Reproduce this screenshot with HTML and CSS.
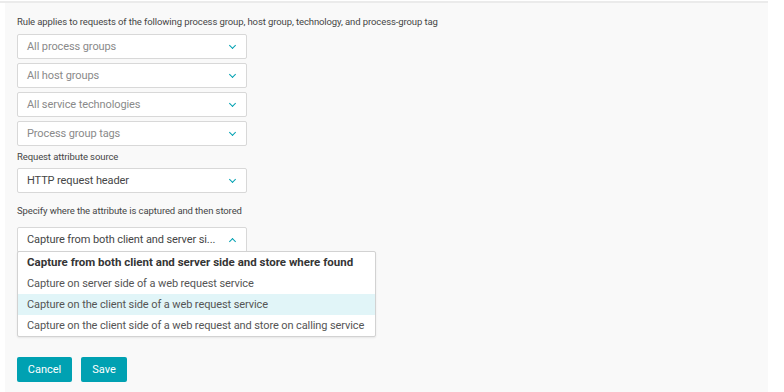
FILE: index.html
```html
<!DOCTYPE html>
<html lang="en">
<head>
    <meta charset="UTF-8">
    <title>Request attribute rule</title>
    <link rel="stylesheet" href="styles.css">
</head>
<body>

<div class="page">
    <section class="panel">
        <p class="label first">Rule applies to requests of the following process group, host group, technology, and process-group tag</p>

        <div class="select placeholder"><span>All process groups</span><i class="chev"></i></div>
        <div class="select placeholder"><span>All host groups</span><i class="chev"></i></div>
        <div class="select placeholder"><span>All service technologies</span><i class="chev"></i></div>
        <div class="select placeholder"><span>Process group tags</span><i class="chev"></i></div>

        <p class="label">Request attribute source</p>
        <div class="select"><span>HTTP request header</span><i class="chev"></i></div>

        <p class="label spaced">Specify where the attribute is captured and then stored</p>

        <!-- opened select -->
        <div class="dropdown">
            <div class="select open"><span>Capture from both client and server si...</span><i class="chev up"></i></div>
            <ul class="options">
                <li class="selected">Capture from both client and server side and store where found</li>
                <li>Capture on server side of a web request service</li>
                <li class="hover">Capture on the client side of a web request service</li>
                <li>Capture on the client side of a web request and store on calling service</li>
            </ul>
        </div>

        <div class="actions">
            <button class="btn cancel">Cancel</button>
            <button class="btn save">Save</button>
        </div>
    </section>
</div>

</body>
</html>
```

FILE: styles.css
```css
body {
    font-family: Roboto, "Open Sans", sans-serif;
    margin: 0;
    padding: 0;
    background-color: #ffffff;
    color: #454646;
}

.page {
    width: 768px;
    border-top: 2px solid #ebebeb;
    margin-top: 1px;
}

.panel {
    margin-left: 5px;
    background-color: #f9f9f9;
    padding: 12px 12px 0 12px;
    min-height: 389px;
    box-sizing: border-box;
}

.label {
    font-size: 9.5px;
    letter-spacing: -0.1px;
    margin: 0 0 4px 0;
    line-height: 14px;
}

.label.first {
    margin-bottom: 5px;
}

.label.spaced {
    margin-top: 11px;
    margin-bottom: 9px;
}

.select {
    width: 230px;
    height: 25px;
    box-sizing: border-box;
    background-color: #ffffff;
    border: 1px solid #d8d8d8;
    border-radius: 2px;
    display: flex;
    align-items: center;
    justify-content: space-between;
    padding: 0 11px 0 9px;
    font-size: 11px;
    letter-spacing: -0.1px;
    color: #454646;
    margin-bottom: 4px;
    white-space: nowrap;
}

.select.placeholder {
    color: #8a8a8a;
}

.select.open {
    margin-bottom: 0;
    border-bottom-left-radius: 0;
    border-bottom-right-radius: 0;
}

.chev {
    width: 4px;
    height: 4px;
    border-right: 1.5px solid #00a1b2;
    border-bottom: 1.5px solid #00a1b2;
    transform: rotate(45deg);
    margin-top: -3px;
}

.chev.up {
    transform: rotate(-135deg);
    margin-top: 3px;
}

.dropdown {
    position: relative;
    height: 25px;
}

.options {
    position: absolute;
    top: 24px;
    left: 0;
    width: 359px;
    box-sizing: border-box;
    margin: 0;
    padding: 0;
    list-style: none;
    background-color: #ffffff;
    border: 1px solid #d2d2d2;
    border-radius: 2px;
    box-shadow: 0 1px 2px rgba(0, 0, 0, 0.08);
    z-index: 2;
}

.options li {
    height: 21px;
    line-height: 21px;
    padding: 0 9px;
    font-size: 11px;
    letter-spacing: -0.1px;
    color: #555555;
    white-space: nowrap;
}

.options li.selected {
    font-weight: bold;
    font-size: 11.5px;
    letter-spacing: 0;
    color: #353535;
}

.options li.hover {
    background-color: #e1f5f8;
}

.actions {
    display: flex;
    gap: 9px;
    margin-top: 105px;
}

.btn {
    height: 25px;
    padding: 0;
    border: none;
    border-radius: 2px;
    background-color: #00a1b2;
    color: #ffffff;
    font-family: Roboto, "Open Sans", sans-serif;
    font-size: 11px;
}

.btn.cancel {
    width: 55px;
}

.btn.save {
    width: 46px;
}
```
